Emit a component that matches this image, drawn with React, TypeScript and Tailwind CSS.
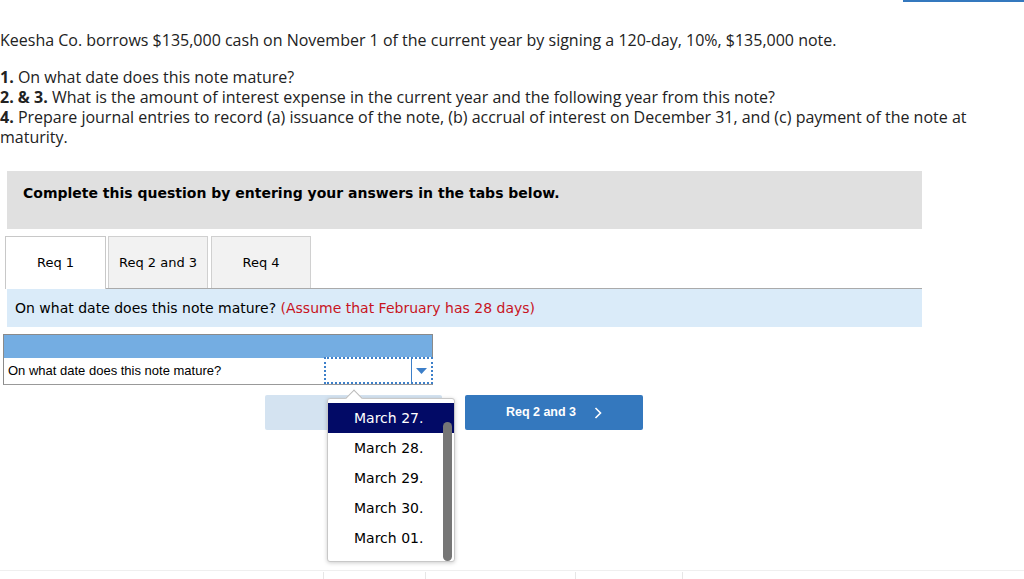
const sans = "font-['Open_Sans','Lato',sans-serif]"
const verdana = "font-['DejaVu_Sans','Verdana',sans-serif]"

const options = ['March 27.', 'March 28.', 'March 29.', 'March 30.', 'March 01.']

const DateDropdown = () => (
  <div className="absolute left-[327px] top-[398px] w-[128px] h-[164px] bg-white border border-[#c8c8c8] rounded-[3px] shadow-[0_1px_4px_rgba(0,0,0,0.2)]">
    {/* little pointer under the select */}
    <div className="absolute -top-[7px] left-[20px] w-[12px] h-[12px] bg-white border-l border-t border-[#bbb] rotate-45" />
    <div className={`relative pt-[4px] ${verdana} text-[14px] text-black`}>
      {options.map((o, i) => (
        <div
          key={o}
          className={`h-[30px] flex items-center pl-[26px] ${i === 0 ? 'bg-[#020a66] text-white' : ''}`}
        >
          {o}
        </div>
      ))}
    </div>
    <div className="absolute right-[2px] top-[23px] w-[9px] h-[139px] rounded-full bg-[#767676]" />
  </div>
)

const App = () => {
  return (
    <div className="relative w-[1024px] h-[579px] bg-white overflow-hidden text-[#222]">
      <div className="flex justify-end">
        <div className="w-[121px] h-[2px] bg-[#3478be]" />
      </div>

      <div className={`${sans} text-[16px] leading-[20px] text-[#222]`}>
        <p className="mt-[28px]">
          Keesha Co. borrows $135,000 cash on November 1 of the current year by signing a 120-day, 10%, $135,000 note.
        </p>
        <div className="mt-[17px]">
          <p><b>1.</b> On what date does this note mature?</p>
          <p><b>2. &amp; 3.</b> What is the amount of interest expense in the current year and the following year from this note?</p>
          <p className="pr-[30px]">
            <b>4.</b> Prepare journal entries to record (a) issuance of the note, (b) accrual of interest on December 31, and (c) payment of the note at maturity.
          </p>
        </div>
      </div>

      <div className={`mt-[24px] ml-[7px] w-[915px] h-[58px] bg-[#e0e0e0] pt-[14px] pl-[16px] ${verdana} font-bold text-[14px] leading-[17px] text-black`}>
        Complete this question by entering your answers in the tabs below.
      </div>

      <div className={`mt-[7px] ml-[5px] w-[917px] flex gap-[2px] border-b border-[#aaa] ${verdana} text-[13px] text-black`}>
        <div className="w-[101px] h-[53px] -mb-[1px] bg-white border border-b-0 border-[#c8c8c8] flex items-center justify-center">Req 1</div>
        <div className="w-[100px] h-[52px] bg-[#f2f2f2] border border-b-0 border-[#d0d0d0] flex items-center justify-center">Req 2 and 3</div>
        <div className="w-[100px] h-[52px] ml-[1px] bg-[#f2f2f2] border border-b-0 border-[#d0d0d0] flex items-center justify-center">Req 4</div>
      </div>

      <div className={`ml-[7px] w-[915px] h-[38px] bg-[#daebf9] flex items-center pl-[8px] ${verdana} text-[14px] text-black`}>
        On what date does this note mature?&nbsp;<span className="text-[#c8141e]">(Assume that February has 28 days)</span>
      </div>

      <div className="mt-[7px] ml-[3px] w-[430px] border border-[#8a8a8a] border-b-[#999]">
        <div className="h-[23px] bg-[#74ade2]" />
        <div className="flex h-[26px] font-['Liberation_Sans','Arial',sans-serif] text-[13px] text-black">
          <div className="flex-1 flex items-center pl-[4px]">On what date does this note mature?</div>
          <div className="w-[109px] flex border-[2px] border-dotted border-[#3c7fc9] bg-white -mt-[1px] -mr-[1px]">
            <div className="flex-1" />
            <div className="w-[20px] border-l border-[#3c7fc9] flex items-center justify-center">
              <svg width="11" height="6" viewBox="0 0 11 6"><path d="M0 0h11L5.5 6z" fill="#3c7fc9" /></svg>
            </div>
          </div>
        </div>
      </div>

      <div className="mt-[10px] ml-[265px] flex gap-[23px]">
        <div className="w-[177px] h-[35px] bg-[#d4e3f1] rounded-[2px]" />
        <div className="w-[178px] h-[35px] bg-[#3478be] rounded-[2px] flex items-center justify-center gap-[18px] font-['Liberation_Sans','Arial',sans-serif] font-bold text-[12.5px] text-white">
          <span>Req 2 and 3</span>
          <svg width="8" height="12" viewBox="0 0 8 12"><path d="M1.5 1l5 5-5 5" stroke="white" strokeWidth="1.6" fill="none" /></svg>
        </div>
      </div>

      <DateDropdown />

      <div className="absolute left-0 right-0 top-[570px] h-[1px] bg-[#efefef]" />
      <div className="absolute top-[572px] left-[323px] w-[1px] h-[7px] bg-[#e6e6e6]" />
      <div className="absolute top-[572px] left-[425px] w-[1px] h-[7px] bg-[#e6e6e6]" />
      <div className="absolute top-[572px] left-[575px] w-[1px] h-[7px] bg-[#e6e6e6]" />
      <div className="absolute top-[572px] left-[682px] w-[1px] h-[7px] bg-[#e6e6e6]" />
    </div>
  )
}

export default App
